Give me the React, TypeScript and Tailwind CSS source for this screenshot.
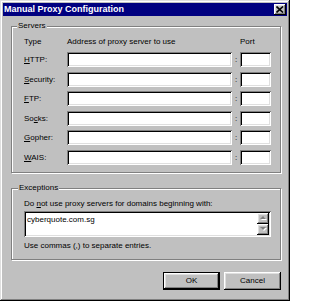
import React from "react";

const sunken =
  "bg-white shadow-[inset_1px_1px_#808080,inset_-1px_-1px_#fff,inset_2px_2px_#000,inset_-2px_-2px_#dfdfdf]";
const raised =
  "bg-[#c0c0c0] shadow-[inset_-1px_-1px_#000,inset_1px_1px_#fff,inset_-2px_-2px_#808080,inset_2px_2px_#dfdfdf]";

function U({ children }: { children: React.ReactNode }) {
  return <span className="underline underline-offset-[1px]">{children}</span>;
}

function Row({ label, mt }: { label: React.ReactNode; mt: string }) {
  return (
    <div className={`flex items-center h-[15px] ${mt}`}>
      <div className="w-[43px] leading-[10px]">{label}</div>
      <div className={`w-[165px] h-[15px] ${sunken}`} />
      <div className="w-[8px] text-center leading-[10px]">:</div>
      <div className={`w-[31px] h-[15px] ${sunken}`} />
    </div>
  );
}

export default function App() {
  return (
    <div className="w-[290px] h-[301px] p-[3px] flex flex-col bg-[#c0c0c0] text-black text-[8px] font-['Liberation_Sans',Arial,sans-serif] shadow-[inset_-1px_-1px_#000,inset_1px_1px_#dfdfdf,inset_-2px_-2px_#808080,inset_2px_2px_#fff]">
      {/* Title bar */}
      <div className="h-[13px] bg-[#000080] flex items-center justify-between pl-[1px] pr-[1px]">
        <span className="text-white font-bold text-[9px] leading-[13px]">Manual Proxy Configuration</span>
        <div className={`w-[12px] h-[11px] flex items-center justify-center ${raised}`}>
          <svg width="8" height="7" viewBox="0 0 8 7">
            <path d="M0.5 0.5 L7 6.5 M7 0.5 L0.5 6.5" stroke="#000" strokeWidth="1.6" fill="none" />
          </svg>
        </div>
      </div>

      {/* Servers group */}
      <div className="relative ml-[8px] mt-[10px] w-[270px] h-[147px] border border-[#808080] shadow-[inset_1px_1px_#fff,1px_1px_#fff] pl-[12px] pt-[10px]">
        <span className="absolute left-[5px] top-[-6px] px-[1px] bg-[#c0c0c0] leading-[10px]">Servers</span>
        <div className="flex h-[10px] leading-[10px]">
          <div className="w-[43px]">Type</div>
          <div className="w-[173px]">Address of proxy server to use</div>
          <div>Port</div>
        </div>
        <Row mt="mt-[5px]" label={<><U>H</U>TTP:</>} />
        <Row mt="mt-[5px]" label={<><U>S</U>ecurity:</>} />
        <Row mt="mt-[4px]" label={<><U>F</U>TP:</>} />
        <Row mt="mt-[5px]" label={<>So<U>c</U>ks:</>} />
        <Row mt="mt-[4px]" label={<><U>G</U>opher:</>} />
        <Row mt="mt-[5px]" label={<><U>W</U>AIS:</>} />
      </div>

      {/* Exceptions group */}
      <div className="relative ml-[8px] mt-[15px] w-[270px] h-[72px] border border-[#808080] shadow-[inset_1px_1px_#fff,1px_1px_#fff] pl-[12px] pt-[10px]">
        <span className="absolute left-[6px] top-[-6px] px-[1px] bg-[#c0c0c0] leading-[10px]">Exceptions</span>
        <div className="h-[10px] leading-[10px]">
          Do <U>n</U>ot use proxy servers for domains beginning with:
        </div>
        <div className={`mt-[2px] w-[247px] h-[26px] flex p-[2px] ${sunken}`}>
          <div className="flex-1 pl-[1px] pt-[2px] leading-[10px]">cyberquote.com.sg</div>
          <div className="w-[12px] flex flex-col">
            <div className={`h-[11px] flex items-center justify-center ${raised}`}>
              <svg width="7" height="5" viewBox="0 0 7 5">
                <path d="M4 1 L7 4 L1 4 Z" fill="#fff" />
                <path d="M3 0 L6 3 L0 3 Z" fill="#808080" />
              </svg>
            </div>
            <div className={`h-[11px] flex items-center justify-center ${raised}`}>
              <svg width="7" height="5" viewBox="0 0 7 5">
                <path d="M1 1 L7 1 L4 4 Z" fill="#fff" />
                <path d="M0 0 L6 0 L3 3 Z" fill="#808080" />
              </svg>
            </div>
          </div>
        </div>
        <div className="mt-[4px] h-[10px] leading-[10px]">Use commas (,) to separate entries.</div>
      </div>

      {/* Buttons */}
      <div className="mt-[12px] flex justify-end gap-[4px] pr-[6px]">
        <div className="w-[57px] h-[18px] border border-black">
          <div className={`w-full h-full flex items-center justify-center leading-[10px] ${raised}`}>OK</div>
        </div>
        <div className={`w-[57px] h-[18px] flex items-center justify-center leading-[10px] ${raised}`}>Cancel</div>
      </div>
    </div>
  );
}
